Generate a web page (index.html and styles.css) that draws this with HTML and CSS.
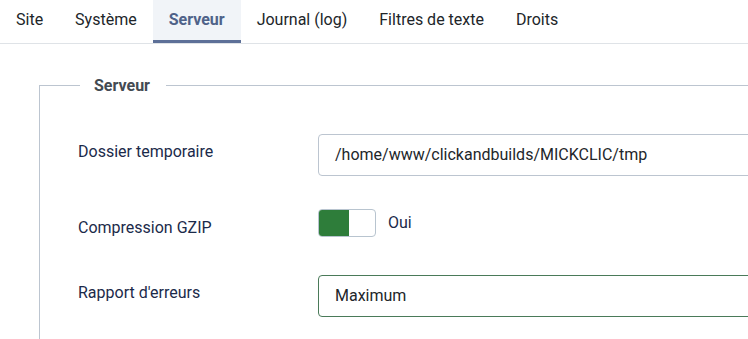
FILE: index.html
```html
<!DOCTYPE html>
<html lang="fr">
<head>
<meta charset="utf-8">
<link rel="stylesheet" href="styles.css">
</head>
<body>
<nav class="tabs">
  <a class="tab">Site</a>
  <a class="tab">Système</a>
  <a class="tab active">Serveur</a>
  <a class="tab">Journal (log)</a>
  <a class="tab">Filtres de texte</a>
  <a class="tab">Droits</a>
</nav>
<div class="content">
  <fieldset class="panel">
    <legend class="legend">Serveur</legend>
    <div class="row row-tmp">
      <label class="label">Dossier temporaire</label>
      <div class="input">/home/www/clickandbuilds/MICKCLIC/tmp</div>
    </div>
    <div class="row row-gzip">
      <label class="label">Compression GZIP</label>
      <div class="switch-wrap">
        <span class="switch"><span class="switch-on"></span></span>
        <span class="switch-text">Oui</span>
      </div>
    </div>
    <div class="row row-err">
      <label class="label">Rapport d'erreurs</label>
      <div class="input select">Maximum</div>
    </div>
  </fieldset>
</div>
</body>
</html>
```
FILE: styles.css
```css
html, body {
  margin: 0;
  padding: 0;
  background: #fff;
  overflow: hidden;
  font-family: Roboto, "Liberation Sans", sans-serif;
  font-size: 16px;
  color: #212529;
}
.tabs {
  display: flex;
  box-sizing: border-box;
  height: 44px;
  border-bottom: 1px solid #dfe3e7;
}
.tab {
  display: block;
  padding: 0 16px;
  line-height: 40px;
  height: 40px;
  border-bottom: 3px solid transparent;
  color: #212529;
}
.tab.active {
  background: #f1f4f8;
  border-bottom-color: #5d7098;
  color: #4f6289;
  font-weight: bold;
}
.content {
  padding: 0 0 0 39px;
  width: 1000px;
}
.panel {
  margin: 32px 0 0 0;
  padding: 0 0 30px 38px;
  border: 1px solid #bcc5d0;
  border-bottom: none;
  border-right: none;
  border-radius: 0;
  min-width: 0;
}
.legend {
  margin-left: 2px;
  padding: 0 16px 0 14px;
  font-weight: bold;
  color: #434a52;
  font-size: 16px;
}
.row {
  display: flex;
  align-items: center;
}
.row-tmp { margin-top: 39px; }
.row-gzip { margin-top: 32px; }
.row-err { margin-top: 38px; }
.label {
  width: 240px;
  color: #1b2a4a;
  font-size: 16px;
}
.row-tmp .label { margin-top: -8px; }
.row-gzip .label { margin-top: 10px; }
.row-err .label { margin-top: -8px; }
.input {
  box-sizing: border-box;
  width: 500px;
  height: 42px;
  line-height: 40px;
  padding: 0 16px;
  border: 1px solid #bcc5d0;
  border-radius: 4px;
  color: #22262a;
}
.select {
  border-color: #4a7a59;
}
.switch-wrap {
  display: flex;
  align-items: center;
  gap: 12px;
}
.switch {
  display: block;
  box-sizing: border-box;
  width: 58px;
  height: 28px;
  border: 1px solid #b8c4cf;
  border-radius: 4px;
  padding: 0;
  background: #fff;
  overflow: hidden;
}
.switch-on {
  display: block;
  width: 30px;
  height: 100%;
  background: #2e7d3a;
}
.switch-text {
  color: #1b2a4a;
  margin-top: 0;
}
```
